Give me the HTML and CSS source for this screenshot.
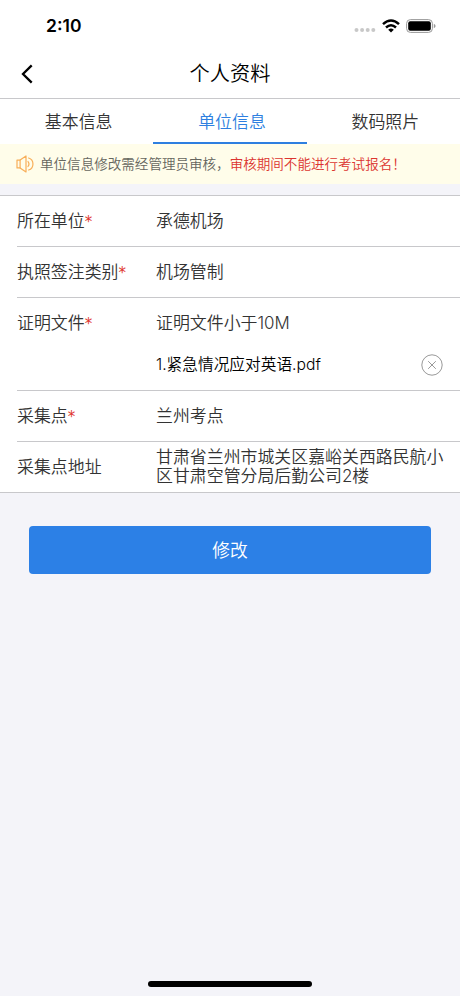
FILE: index.html
```html
<!DOCTYPE html>
<html lang="zh-CN">
<head>
<meta charset="utf-8">
<title>个人资料</title>
<link rel="stylesheet" href="styles.css">
</head>
<body>
<div class="screen">
  <div class="status">
    <span class="time">2:10</span>
    <div class="indicators">
      <svg class="dots" width="22" height="6" viewBox="0 0 22 6" fill="#c8c8c8"><circle cx="2.5" cy="3" r="2"/><circle cx="8.1" cy="3" r="2"/><circle cx="13.7" cy="3" r="2"/><circle cx="19.3" cy="3" r="2"/></svg>
      <svg class="wifi" width="18" height="14" viewBox="0 0 18 14"><g fill="none" stroke="#000" stroke-width="2.5"><path d="M1 5.1Q9-2.2 17 5.1"/><path d="M4 8.5Q9 4 14 8.5"/></g><path d="M6.2 10.7Q9 8.5 11.8 10.7L9 13.5Z"/></svg>
      <svg class="battery" width="30" height="14" viewBox="0 0 30 14"><rect x=".6" y=".6" width="25.8" height="12.8" rx="3.8" fill="#fff" stroke="#999" stroke-width="1"/><rect x="2.2" y="2.2" width="22.6" height="9.6" rx="2"/><path d="M27.8 4.8Q29.6 5.6 29.6 7T27.8 9.2Z" fill="#999"/></svg>
    </div>
  </div>
  <header class="navbar">
    <svg class="back" width="14" height="20" viewBox="0 0 14 20" fill="none" stroke="#000" stroke-width="2.3"><path d="M11.7 1.4L3 10L11.7 18.6"/></svg>
    <h1 class="title">个人资料</h1>
  </header>
  <nav class="tabs">
    <span class="tab">基本信息</span>
    <span class="tab active">单位信息</span>
    <span class="tab">数码照片</span>
  </nav>
  <div class="notice">
    <svg class="speaker" width="18" height="18" viewBox="0 0 18 18" fill="none" stroke="#f8ae58" stroke-width="1.2" stroke-linejoin="round" stroke-linecap="round"><path d="M1 5.1H4.1L10 1V17L4.1 12.9H1Z"/><path d="M4.1 5.1V12.9M12 6.5Q14 9 12 11.5M12.6 3C18.4 4.6 18.4 13.4 12.6 15"/></svg>
    <span class="text">单位信息修改需经管理员审核，<span class="warn">审核期间不能进行考试报名！</span></span>
  </div>
  <main class="form">
    <div class="row"><span class="label">所在单位<i>*</i></span><span class="value">承德机场</span></div>
    <div class="row"><span class="label">执照签注类别<i>*</i></span><span class="value">机场管制</span></div>
    <div class="row files">
      <span class="label">证明文件<i>*</i></span>
      <div class="value">
        <div class="hint">证明文件小于10M</div>
        <div class="file"><span class="name">1.紧急情况应对英语.pdf</span>
          <svg width="22" height="22" viewBox="0 0 22 22" fill="none" stroke="#999" stroke-width="1"><circle cx="11" cy="11" r="10.2"/><path d="M7.2 7.2L14.8 14.8M14.8 7.2L7.2 14.8"/></svg>
        </div>
      </div>
    </div>
    <div class="row"><span class="label">采集点<i>*</i></span><span class="value">兰州考点</span></div>
    <div class="row"><span class="label">采集点地址</span><span class="value address">甘肃省兰州市城关区嘉峪关西路民航小区甘肃空管分局后勤公司2楼</span></div>
  </main>
  <button class="submit">修改</button>
  <div class="home"></div>
</div>
</body>
</html>
```
FILE: styles.css
```css
* { box-sizing: border-box; }
body { margin: 0; font-family: "Inter", "Noto Sans CJK SC", sans-serif; font-size: 16.92px; font-weight: 350; color: #333; }
.screen { width: 460px; height: 996px; display: flex; flex-direction: column; background: #f4f4f9; overflow: hidden; }
svg { display: block; flex: none; }
.status { height: 50px; flex: none; display: flex; justify-content: space-between; align-items: center; padding: 1px 24px 0 46px; background: #fff; }
.time { font-size: 17.5px; font-weight: 600; color: #000; }
.indicators { display: flex; align-items: center; }
.dots { margin: 9px 6px 0 0; }
.wifi { margin-right: 6px; }
.navbar { height: 49px; flex: none; display: grid; grid-template-columns: 40px 1fr 40px; align-items: center; background: #fff; border-bottom: 1px solid #c8c8cb; }
.back { margin-left: 20px; }
.title { margin: 0; font-size: 20.2px; line-height: 48px; font-weight: 350; text-align: center; color: #000; }
.tabs { height: 45px; flex: none; display: grid; grid-template-columns: repeat(3, 1fr); background: #fff; }
.tab { text-align: center; line-height: 45px; border-bottom: 2px solid transparent; height: 45px; padding: 1px 0 0 4px; }
.tab.active { color: #2e7fe0; border-color: #2e7fe0; }
.notice { height: 40px; flex: none; display: flex; align-items: center; padding-left: 16px; background: #fffdea; font-size: 13.55px; color: #66665e; white-space: nowrap; }
.speaker { margin-right: 6px; }
.text { padding-bottom: 3px; }
.warn { color: #dc3530; }
.form { margin-top: 11px; background: #fff; border-top: 1px solid #c8c8cb; border-bottom: 1px solid #c8c8cb; padding-left: 17px; }
.row { height: 51px; display: flex; align-items: center; line-height: 50px; border-bottom: 1px solid #c8c8cb; }
.row:last-child { height: 50px; border: 0; }
.label { width: 139px; flex: none; }
.label i { display: inline-block; font-style: normal; font-weight: 400; line-height: 20px; color: #e0362e; font-family: "DejaVu Sans", sans-serif; font-size: 15px; }
.value { flex: 1; }
.address { line-height: 18.8px; padding: 0 10px 1px 0; }
.files { height: 93px; align-items: flex-start; }
.file { display: flex; justify-content: space-between; align-items: center; height: 34px; padding-right: 17px; color: #000; font-size: 15.7px; line-height: 34px; }
.submit { height: 48px; flex: none; margin: 33px 29px 0; padding: 2px 0 0; border: 0; border-radius: 4px; background: #2c80e6; color: #fff; font: inherit; font-size: 17.8px; line-height: 46px; }
.home { width: 164px; height: 6px; flex: none; border-radius: 3px; background: #000; margin: auto auto 9px; }
```
